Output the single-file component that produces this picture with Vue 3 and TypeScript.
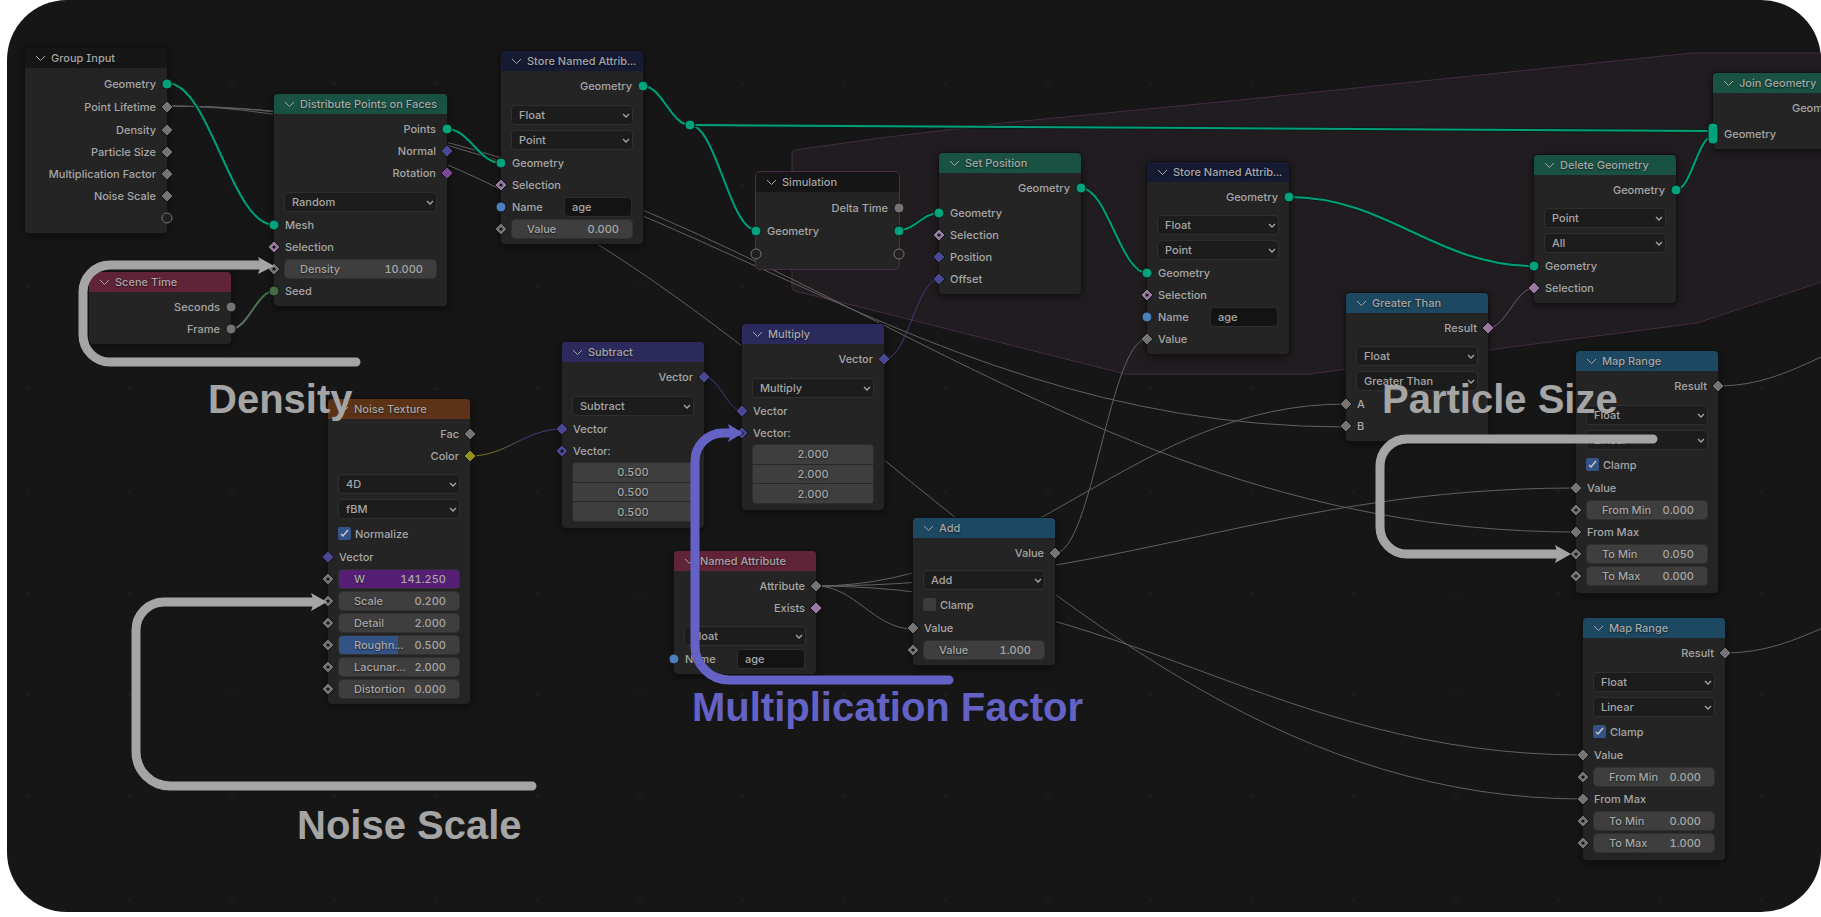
<script setup lang="ts">
type Shape = 'dot' | 'ring' | 'diamond' | 'field' | 'multi'
type Side = 'left' | 'right'
type Gap = 'small' | 'medium' | 'large'

interface Socket {
  side: Side
  shape: Shape
  tone: string
}

interface Row {
  kind: 'out' | 'in' | 'select' | 'check' | 'num' | 'text' | 'vec'
  label: string
  value?: string
  values?: string[]
  sockets?: Socket[]
  tall?: boolean
  gap?: Gap
  checked?: boolean
  fill?: 'driven' | 'half'
}

interface GraphNode {
  id: string
  title: string
  tone: string
  x: number
  y: number
  w: number
  rows: Row[]
  roomy?: boolean
  zone?: boolean
}

interface Link {
  from: [number, number]
  to: [number, number]
  tone: string
}

const GEO = '#00a37c'
const GREY = '#747474'
const VEC = '#4a4894'
const BOOL = '#9479a0'
const TEXT = '#4c80bd'

const sock = (side: Side, shape: Shape, tone: string): Socket => ({ side, shape, tone })
const out = (label: string, shape: Shape, tone: string, extra: Partial<Row> = {}): Row => ({
  kind: 'out', label, sockets: [sock('right', shape, tone)], ...extra,
})
const inp = (label: string, shape: Shape, tone: string, extra: Partial<Row> = {}): Row => ({
  kind: 'in', label, sockets: [sock('left', shape, tone)], ...extra,
})
const sel = (label: string, gap?: Gap): Row => ({ kind: 'select', label, gap })
const num = (label: string, value: string, extra: Partial<Row> = {}): Row => ({
  kind: 'num', label, value, sockets: [sock('left', 'field', GREY)], ...extra,
})
const name = (): Row => ({ kind: 'text', label: 'Name', value: 'age', sockets: [sock('left', 'dot', TEXT)] })

const mapRange = (id: string, x: number, y: number, toMin: string, toMax: string): GraphNode => ({
  id, title: 'Map Range', tone: 'converter', x, y, w: 142, roomy: true,
  rows: [
    out('Result', 'diamond', GREY),
    sel('Float', 'large'),
    sel('Linear'),
    { kind: 'check', label: 'Clamp', checked: true },
    inp('Value', 'diamond', GREY),
    num('From Min', '0.000'),
    inp('From Max', 'diamond', GREY),
    num('To Min', toMin),
    num('To Max', toMax),
  ],
})

const nodes: GraphNode[] = [
  {
    id: 'group-input', title: 'Group Input', tone: 'plain', x: 25, y: 48, w: 142,
    rows: [
      out('Geometry', 'dot', GEO, { tall: true }),
      out('Point Lifetime', 'diamond', GREY, { tall: true }),
      out('Density', 'diamond', GREY, { tall: true }),
      out('Particle Size', 'diamond', GREY),
      out('Multiplication Factor', 'diamond', GREY),
      out('Noise Scale', 'diamond', GREY),
      out('', 'ring', GREY),
    ],
  },
  {
    id: 'distribute', title: 'Distribute Points on Faces', tone: 'geometry', x: 274, y: 94, w: 173,
    rows: [
      out('Points', 'dot', GEO),
      out('Normal', 'diamond', VEC),
      out('Rotation', 'diamond', '#7a4896'),
      sel('Random', 'large'),
      inp('Mesh', 'dot', GEO),
      inp('Selection', 'field', BOOL),
      num('Density', '10.000'),
      inp('Seed', 'dot', '#456b45'),
    ],
  },
  {
    id: 'store-a', title: 'Store Named Attrib...', tone: 'attribute', x: 501, y: 51, w: 142,
    rows: [
      out('Geometry', 'dot', GEO),
      sel('Float', 'large'),
      sel('Point'),
      inp('Geometry', 'dot', GEO),
      inp('Selection', 'field', BOOL),
      name(),
      num('Value', '0.000'),
    ],
  },
  {
    id: 'simulation', title: 'Simulation', tone: 'plain', x: 756, y: 172, w: 143, zone: true,
    rows: [
      out('Delta Time', 'dot', GREY, { tall: true }),
      { kind: 'in', label: 'Geometry', tall: true, sockets: [sock('left', 'dot', GEO), sock('right', 'dot', GEO)] },
      { kind: 'in', label: '', tall: true, sockets: [sock('left', 'ring', GREY), sock('right', 'ring', GREY)] },
    ],
  },
  {
    id: 'set-position', title: 'Set Position', tone: 'geometry', x: 939, y: 153, w: 142,
    rows: [
      out('Geometry', 'dot', GEO),
      inp('Geometry', 'dot', GEO, { gap: 'small' }),
      inp('Selection', 'field', BOOL),
      inp('Position', 'diamond', VEC),
      inp('Offset', 'diamond', VEC),
    ],
  },
  {
    id: 'store-b', title: 'Store Named Attrib...', tone: 'attribute', x: 1147, y: 162, w: 142,
    rows: [
      out('Geometry', 'dot', GEO),
      sel('Float', 'medium'),
      sel('Point'),
      inp('Geometry', 'dot', GEO),
      inp('Selection', 'field', BOOL),
      name(),
      inp('Value', 'diamond', GREY),
    ],
  },
  {
    id: 'greater', title: 'Greater Than', tone: 'converter', x: 1346, y: 293, w: 142,
    rows: [
      out('Result', 'diamond', BOOL),
      sel('Float', 'medium'),
      sel('Greater Than'),
      inp('A', 'diamond', GREY),
      inp('B', 'diamond', GREY),
    ],
  },
  {
    id: 'delete', title: 'Delete Geometry', tone: 'geometry', x: 1534, y: 155, w: 142,
    rows: [
      out('Geometry', 'dot', GEO),
      sel('Point', 'medium'),
      sel('All'),
      inp('Geometry', 'dot', GEO),
      inp('Selection', 'diamond', BOOL),
    ],
  },
  {
    id: 'join', title: 'Join Geometry', tone: 'geometry', x: 1713, y: 73, w: 142,
    rows: [
      out('Geometry', 'dot', GEO),
      inp('Geometry', 'multi', GEO, { gap: 'medium' }),
    ],
  },
  mapRange('map-a', 1576, 351, '0.050', '0.000'),
  mapRange('map-b', 1583, 618, '0.000', '1.000'),
  {
    id: 'multiply', title: 'Multiply', tone: 'vector', x: 742, y: 324, w: 142, roomy: true,
    rows: [
      out('Vector', 'diamond', VEC),
      sel('Multiply', 'large'),
      inp('Vector', 'diamond', VEC),
      inp('Vector:', 'field', VEC),
      { kind: 'vec', label: 'Vector', values: ['2.000', '2.000', '2.000'] },
    ],
  },
  {
    id: 'subtract', title: 'Subtract', tone: 'vector', x: 562, y: 342, w: 142, roomy: true,
    rows: [
      out('Vector', 'diamond', VEC),
      sel('Subtract', 'large'),
      inp('Vector', 'diamond', VEC),
      inp('Vector:', 'field', VEC),
      { kind: 'vec', label: 'Vector', values: ['0.500', '0.500', '0.500'] },
    ],
  },
  {
    id: 'named', title: 'Named Attribute', tone: 'input', x: 674, y: 551, w: 142,
    rows: [
      out('Attribute', 'diamond', GREY),
      out('Exists', 'diamond', BOOL),
      sel('Float', 'medium'),
      name(),
    ],
  },
  {
    id: 'add', title: 'Add', tone: 'converter', x: 913, y: 518, w: 142,
    rows: [
      out('Value', 'diamond', GREY),
      sel('Add', 'small'),
      { kind: 'check', label: 'Clamp', checked: false },
      inp('Value', 'diamond', GREY),
      num('Value', '1.000'),
    ],
  },
  {
    id: 'noise', title: 'Noise Texture', tone: 'texture', x: 328, y: 399, w: 142,
    rows: [
      out('Fac', 'diamond', GREY),
      out('Color', 'diamond', '#93901d'),
      sel('4D', 'medium'),
      sel('fBM'),
      { kind: 'check', label: 'Normalize', checked: true },
      inp('Vector', 'diamond', VEC),
      num('W', '141.250', { fill: 'driven' }),
      num('Scale', '0.200'),
      num('Detail', '2.000'),
      num('Roughn...', '0.500', { fill: 'half' }),
      num('Lacunar...', '2.000'),
      num('Distortion', '0.000'),
    ],
  },
  {
    id: 'scene-time', title: 'Scene Time', tone: 'input', x: 89, y: 272, w: 142,
    rows: [
      out('Seconds', 'dot', GREY),
      out('Frame', 'dot', GREY),
    ],
  },
]

const WIRE = '#606060'

const fieldLinks: Link[] = [
  { from: [167, 106], to: [1346, 427], tone: WIRE },
  { from: [167, 106], to: [1576, 532], tone: WIRE },
  { from: [167, 106], to: [1583, 799], tone: WIRE },
  { from: [816, 586], to: [913, 629], tone: WIRE },
  { from: [816, 586], to: [1346, 404], tone: WIRE },
  { from: [816, 586], to: [1576, 488], tone: WIRE },
  { from: [816, 586], to: [1583, 755], tone: WIRE },
  { from: [1055, 553], to: [1147, 339], tone: WIRE },
  { from: [1718, 386], to: [1920, 330], tone: WIRE },
  { from: [1725, 653], to: [1927, 600], tone: WIRE },
  { from: [704, 377], to: [743, 411], tone: '#3d3b7c' },
  { from: [885, 359], to: [939, 279], tone: '#3d3b7c' },
  { from: [470, 456], to: [562, 429], tone: 'url(#color-to-vector)' },
  { from: [1488, 328], to: [1534, 288], tone: '#705c78' },
]

const geometryLinks: Link[] = [
  { from: [167, 83], to: [274, 225], tone: '#009f79' },
  { from: [447, 129], to: [501, 163], tone: '#009f79' },
  { from: [643, 86], to: [690, 125], tone: '#009f79' },
  { from: [690, 125], to: [756, 230], tone: '#009f79' },
  { from: [690, 125], to: [1713, 131], tone: '#009f79' },
  { from: [899, 230], to: [939, 213], tone: '#009f79' },
  { from: [1081, 188], to: [1147, 273], tone: '#009f79' },
  { from: [1289, 197], to: [1534, 266], tone: '#009f79' },
  { from: [1676, 190], to: [1713, 136], tone: '#009f79' },
  { from: [231, 329], to: [274, 291], tone: 'url(#value-to-int)' },
]

function curve(link: Link): string {
  const [x1, y1] = link.from
  const [x2, y2] = link.to
  const h = Math.round((x2 - x1) * 0.4)
  return `M${x1} ${y1} C${x1 + h} ${y1} ${x2 - h} ${y2} ${x2} ${y2}`
}
</script>

<template>
  <main class="frame">
    <div class="canvas">
      <svg class="layer" aria-hidden="true">
        <defs>
          <linearGradient id="color-to-vector">
            <stop offset="0.3" stop-color="#77751f" />
            <stop offset="0.6" stop-color="#3d3b7c" />
          </linearGradient>
          <linearGradient id="value-to-int">
            <stop offset="0.2" stop-color="#6e6e6e" />
            <stop offset="0.7" stop-color="#456b45" />
          </linearGradient>
        </defs>
        <path
          class="zone"
          d="M792 154 Q792 151 795 150 L880 138 L955 129 L993 124 L1240 100 L1692 53 H1900 V256 L1697 323 L1488 350 L1310 374 H1125 L880 312 L795 291 Q792 290 792 287 Z"
        />
        <path v-for="(l, i) in fieldLinks" :key="'f' + i" class="link thin" :d="curve(l)" :stroke="l.tone" />
        <g v-for="(l, i) in geometryLinks" :key="'g' + i">
          <path class="link casing" :d="curve(l)" />
          <path class="link thick" :d="curve(l)" :stroke="l.tone" />
        </g>
        <circle class="reroute" cx="690" cy="125" r="5" />
      </svg>

      <section
        v-for="n in nodes"
        :key="n.id"
        class="node"
        :class="{ roomy: n.roomy, zoned: n.zone }"
        :style="{ left: n.x + 'px', top: n.y + 'px', width: n.w + 'px' }"
      >
        <header class="head" :class="n.tone">
          <button class="fold" type="button" :aria-label="'Collapse ' + n.title">
            <svg width="11" height="7" viewBox="0 0 11 7"><path d="M1 1 L5.5 5.5 L10 1" /></svg>
          </button>
          <span class="title">{{ n.title }}</span>
        </header>
        <div class="body">
          <div
            v-for="(r, i) in n.rows"
            :key="i"
            class="row"
            :class="[r.kind, r.gap, { tall: r.tall }]"
          >
            <span v-if="r.kind === 'out' || r.kind === 'in'">{{ r.label }}</span>

            <template v-else-if="r.kind === 'select'">
              <select class="drop" :aria-label="n.title + ' ' + r.label">
                <option>{{ r.label }}</option>
              </select>
              <svg class="caret" width="8" height="6" viewBox="0 0 8 6"><path d="M1 1 L4 4 L7 1" /></svg>
            </template>

            <label v-else-if="r.kind === 'check'" class="tick">
              <input type="checkbox" :checked="r.checked" />
              <svg v-if="r.checked" class="mark" width="13" height="13" viewBox="0 0 13 13">
                <path d="M3 7 L5 9 L10 3" />
              </svg>
              <span>{{ r.label }}</span>
            </label>

            <label v-else-if="r.kind === 'num'" class="slider" :class="r.fill">
              <span>{{ r.label }}</span>
              <input type="text" :value="r.value" />
            </label>

            <label v-else-if="r.kind === 'text'" class="named">
              <span>{{ r.label }}</span>
              <input type="text" :value="r.value" />
            </label>

            <div v-else class="triple">
              <input
                v-for="(v, k) in r.values"
                :key="k"
                type="text"
                :value="v"
                :aria-label="r.label + ' ' + 'XYZ'[k]"
              />
            </div>

            <svg
              v-for="s in r.sockets"
              :key="s.side"
              class="socket"
              :class="s.side"
              width="14"
              height="24"
              viewBox="-7 -12 14 24"
              aria-hidden="true"
            >
              <circle v-if="s.shape === 'dot'" r="5" class="edge" :fill="s.tone" />
              <circle v-else-if="s.shape === 'ring'" r="5" fill="#202020" :stroke="s.tone" />
              <rect v-else-if="s.shape === 'multi'" x="-5" y="-11" width="10" height="21" rx="4" class="edge" :fill="s.tone" />
              <path v-else d="M0 -6 L6 0 L0 6 L-6 0 Z" class="edge" :fill="s.tone" />
              <circle v-if="s.shape === 'field'" r="1.6" fill="#111" />
            </svg>
          </div>
        </div>
      </section>

      <svg class="layer" aria-hidden="true">
        <g class="arrow pale">
          <path d="M356 362 H110 A27 27 0 0 1 83 335 V292 A27 27 0 0 1 110 265 H262" />
          <path class="tip" d="M258 257 L274 266 L258 274 L261 265 Z" />
          <path d="M532 786 H170 A34 34 0 0 1 136 752 V630 A28 28 0 0 1 164 602 H316" />
          <path class="tip" d="M311 593 L327 602 L311 611 L314 602 Z" />
          <path d="M1653 439 H1407 A27 27 0 0 0 1380 466 V527 A27 27 0 0 0 1407 554 H1559" />
          <path class="tip" d="M1555 545 L1571 554 L1555 563 L1558 554 Z" />
        </g>
        <g class="arrow violet">
          <path d="M949 680 H729 A34 34 0 0 1 695 646 V461 A28 28 0 0 1 723 433 H732" />
          <path class="tip" d="M728 424 L743 433 L728 442 L731 433 Z" />
        </g>
      </svg>

      <strong class="note density">Density</strong>
      <strong class="note noise">Noise Scale</strong>
      <strong class="note factor">Multiplication Factor</strong>
      <strong class="note size">Particle Size</strong>
    </div>
  </main>
</template>

<style>
body {
  margin: 0;
  background: #fff;
}
</style>

<style scoped>
.frame {
  position: relative;
  height: calc(100vh - 5px);
  margin-left: 7px;
  border-radius: 60px;
  overflow: hidden;
  background-color: #161616;
  background-image: radial-gradient(circle, #1e1e1e 1px, transparent 2px);
  background-size: 102px 102px;
  background-position: -30px 32px;
  color: #a6a6a6;
  font: 500 11px/22px Inter, "Liberation Sans", sans-serif;
  font-feature-settings: "tnum", "cv08";
}
.canvas {
  position: absolute;
  inset: 0 0 0 -7px;
}
.layer {
  position: absolute;
  inset: 0;
  width: 100%;
  height: 100%;
  pointer-events: none;
}
.zone {
  fill: #211c20;
  stroke: #432c42;
}
.link {
  fill: none;
}
.thin {
  stroke-width: 1;
}
.thick {
  stroke-width: 2;
}
.casing {
  stroke: #0d1d19;
  stroke-width: 4;
}
.reroute {
  fill: #00a37c;
  stroke: #111;
}
.node {
  position: absolute;
  border-radius: 4px;
  background: #242424;
  box-shadow: 0 0 0 1px #121212, 0 2px 7px 1px rgba(0, 0, 0, 0.5);
}
.zoned {
  box-shadow: 0 0 0 1px #472e46;
}
.head {
  display: flex;
  align-items: center;
  height: 20px;
  border-radius: 4px 4px 0 0;
  white-space: nowrap;
}
.title {
  text-shadow: 0 1px 2px rgba(0, 0, 0, 0.6);
}
.plain { background: #161616; }
.geometry { background: #195243; }
.attribute { background: #161a33; }
.converter { background: #1d4861; }
.vector { background: #2c2a5c; }
.input { background: #612338; }
.texture { background: #5d3317; }
.fold {
  display: flex;
  align-items: center;
  justify-content: center;
  width: 11px;
  height: 20px;
  margin: 0 5px 0 10px;
  padding: 0;
  border: 0;
  background: none;
}
.fold path,
.caret path {
  fill: none;
  stroke: #a6a6a6;
  stroke-width: 1;
}
.caret path {
  stroke-width: 1.3;
}
.body {
  display: flex;
  flex-direction: column;
  padding: 4px 0;
}
.roomy .body {
  padding-bottom: 6px;
}
.row {
  position: relative;
  display: flex;
  align-items: center;
  height: 22px;
  padding: 0 11px;
}
.tall { height: 23px; }
.small { margin-top: 3px; }
.medium { margin-top: 4px; }
.large { margin-top: 5px; }
.row.out { justify-content: flex-end; }
.row.select,
.row.check {
  height: 25px;
}
.row.select,
.row.check,
.row.num,
.row.vec {
  padding: 0 10px;
}
.row.vec { height: 60px; }
.socket {
  position: absolute;
  top: 50%;
  margin-top: -12px;
}
.socket.left { left: -7px; }
.socket.right { right: -7px; }
.edge {
  stroke: #141414;
  stroke-width: 1;
}
input,
select {
  box-sizing: border-box;
  margin: 0;
  border: 0;
  outline: 0;
  background: none;
  color: inherit;
  font: inherit;
  font-feature-settings: inherit;
  line-height: 18px;
  appearance: none;
}
.drop {
  width: 100%;
  height: 20px;
  padding: 0 20px 0 7px;
  border: 1px solid #2f2f2f;
  border-radius: 4px;
  background: #1c1c1c;
}
.caret {
  position: absolute;
  right: 13px;
  top: 11px;
}
.tick {
  position: relative;
  display: flex;
  align-items: center;
  gap: 4px;
}
.tick input {
  width: 13px;
  height: 13px;
  border-radius: 2px;
  background: #3c3c3c;
}
.tick input:checked { background: #335387; }
.mark {
  position: absolute;
  left: 0;
}
.mark path {
  fill: none;
  stroke: #c8c8c8;
  stroke-width: 1.5;
}
.slider {
  display: flex;
  align-items: center;
  justify-content: space-between;
  box-sizing: border-box;
  width: 100%;
  height: 20px;
  padding: 0 13px 0 15px;
  border: 1px solid #303030;
  border-radius: 4px;
  background: #3e3e3e;
  background-clip: padding-box;
  text-shadow: 0 1px 2px rgba(0, 0, 0, 0.6);
}
.slider input {
  width: 48px;
  padding: 0;
  text-align: right;
}
.slider span {
  width: 44px;
  white-space: nowrap;
}
.driven { background: #571e75; }
.half { background: linear-gradient(90deg, #335387 49%, #3e3e3e 49%); }
.named {
  display: flex;
  align-items: center;
  justify-content: space-between;
  width: 100%;
}
.named input {
  width: 68px;
  height: 20px;
  padding: 0 7px;
  border: 1px solid #2c2c2c;
  border-radius: 4px;
  background: #131313;
}
.triple {
  display: grid;
  gap: 1px;
  box-sizing: border-box;
  width: 100%;
  height: 60px;
  border: 1px solid #2e2e2e;
  border-radius: 4px;
  overflow: hidden;
  background: #272727;
}
.triple input {
  width: 100%;
  min-height: 0;
  background: #3e3e3e;
  text-align: center;
  text-shadow: 0 1px 2px rgba(0, 0, 0, 0.6);
}
.arrow {
  fill: none;
  stroke-width: 9;
  stroke-linecap: round;
}
.arrow .tip { stroke: none; }
.pale { stroke: #a5a5a5; }
.pale .tip { fill: #a5a5a5; }
.violet { stroke: #6462c5; }
.violet .tip { fill: #6462c5; }
.note {
  position: absolute;
  color: #a5a5a5;
  font: bold 40px/40px "Liberation Sans", sans-serif;
  white-space: nowrap;
}
.density { left: 208px; top: 379px; }
.noise { left: 297px; top: 805px; }
.factor { left: 692px; top: 687px; color: #6462c5; }
.size { left: 1382px; top: 379px; }
</style>
